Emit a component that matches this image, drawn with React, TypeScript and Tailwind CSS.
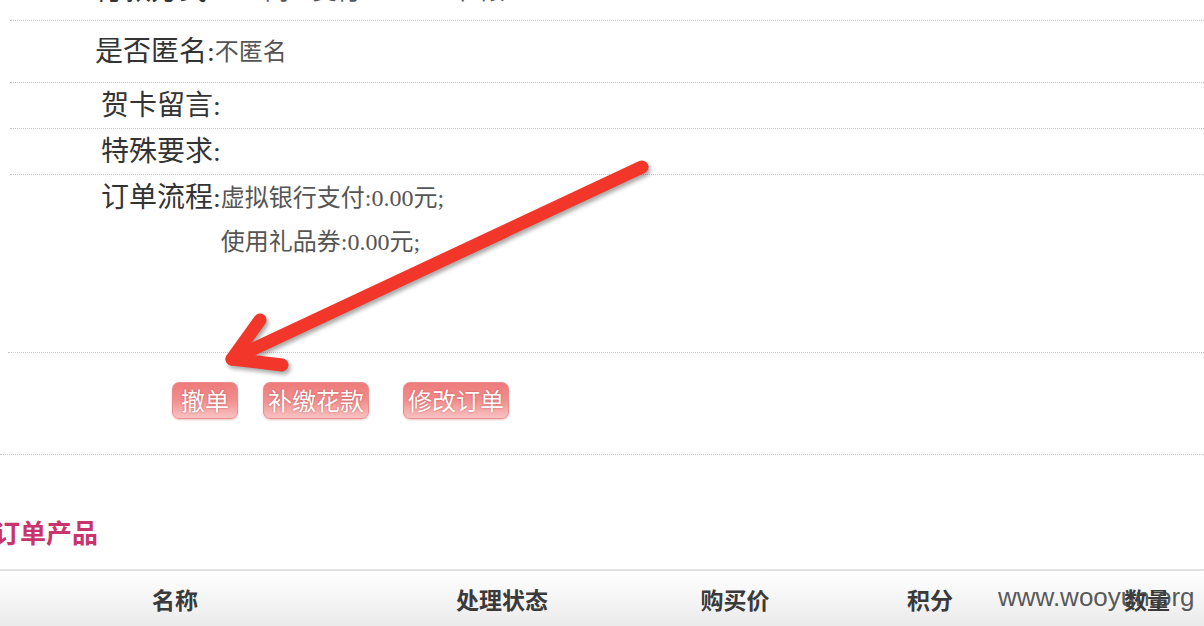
import React from "react";

const cjk = { fontFamily: '"Liberation Serif", "Noto Sans CJK SC", serif' };

function Btn({ label, w }: { label: string; w: string }) {
  return (
    <div
      className={`${w} h-[37px] rounded-[7px] border border-[#ec8d8d] bg-gradient-to-b from-[#ee7b7b] via-[#f18e8e] to-[#f8c2c2] flex items-center justify-center pt-[3px] text-white text-[24px] leading-none shadow-[0_1px_2px_rgba(200,80,80,0.35)] [text-shadow:0_0_2px_rgba(160,30,30,0.6)]`}
    >
      {label}
    </div>
  );
}

export default function App() {
  return (
    <div className="relative w-[1204px] h-[626px] overflow-hidden bg-white text-[#333]" style={cjk}>
      {/* top partial row */}
      <div className="-mt-[39px] h-[60px] ml-[10px] border-b border-dotted border-[#c8c8c8] flex items-center pl-[85px] text-[28px]">
        <span>付款方式:</span>
        <span className="text-[24px] text-[#555] ml-[50px]">网上支付</span>
        <span className="text-[24px] text-[#555] ml-[60px]">一 不 限</span>
      </div>
      {/* 是否匿名 */}
      <div className="h-[62px] ml-[10px] border-b border-dotted border-[#c8c8c8] flex items-center pl-[85px]">
        <span className="text-[28px] text-[#333]">是否匿名:</span>
        <span className="text-[24px] text-[#555]">不匿名</span>
      </div>
      {/* 贺卡留言 */}
      <div className="h-[46px] ml-[10px] border-b border-dotted border-[#c8c8c8] flex items-center pl-[91px]">
        <span className="text-[28px] text-[#333]">贺卡留言:</span>
      </div>
      {/* 特殊要求 */}
      <div className="h-[46px] ml-[10px] border-b border-dotted border-[#c8c8c8] flex items-center pl-[91px]">
        <span className="text-[28px] text-[#333]">特殊要求:</span>
      </div>
      {/* 订单流程 */}
      <div className="h-[178px] ml-[8px] border-b border-dotted border-[#c8c8c8] flex items-start pl-[93px] pt-[1px]">
        <span className="text-[28px] leading-[44px] text-[#333]">订单流程:</span>
        <div className="flex flex-col text-[24px] leading-[44px] text-[#555]">
          <span>虚拟银行支付:0.00元;</span>
          <span>使用礼品券:0.00元;</span>
        </div>
      </div>
      {/* buttons */}
      <div className="h-[102px] border-b border-dotted border-[#c8c8c8] flex items-start pt-[29px] pl-[172px]">
        <Btn label="撤单" w="w-[66px]" />
        <div className="ml-[25px]">
          <Btn label="补缴花款" w="w-[106px]" />
        </div>
        <div className="ml-[34px]">
          <Btn label="修改订单" w="w-[106px]" />
        </div>
      </div>
      {/* heading */}
      <div className="h-[114px] pt-[60px] -ml-[6px]">
        <span className="text-[26px] leading-[39px] font-bold text-[#c9346c]">订单产品</span>
      </div>
      {/* table header */}
      <div className="h-[70px] border-t-2 border-[#e2e2e2] bg-gradient-to-b from-white to-[#e6e6e6] flex items-start pt-[13px] text-[23px] font-bold text-[#3a3a3a] leading-[36px]">
        <div className="w-[350px] shrink-0 text-center">名称</div>
        <div className="w-[304px] shrink-0 text-center">处理状态</div>
        <div className="w-[162px] shrink-0 text-center">购买价</div>
        <div className="w-[228px] shrink-0 text-center">积分</div>
        <div className="w-[206px] shrink-0 text-center">数量</div>
      </div>

      {/* watermark */}
      <div
        className="absolute left-[998px] top-[580px] text-[26px] leading-[34px] text-[#444]/90"
        style={{ fontFamily: '"Liberation Sans", Arial, sans-serif' }}
      >
        www.wooyun.org
      </div>

      {/* arrow */}
      <svg
        className="absolute left-0 top-0 pointer-events-none drop-shadow-[2px_3px_2px_rgba(0,0,0,0.35)]"
        width="1204"
        height="626"
        viewBox="0 0 1204 626"
      >
        <g stroke="#f2362a" strokeWidth="13" strokeLinecap="round" strokeLinejoin="round" fill="none">
          <line x1="642" y1="167" x2="234" y2="358" />
          <line x1="232" y1="359" x2="260" y2="320" />
          <line x1="232" y1="359" x2="282" y2="365" />
        </g>
      </svg>
    </div>
  );
}
